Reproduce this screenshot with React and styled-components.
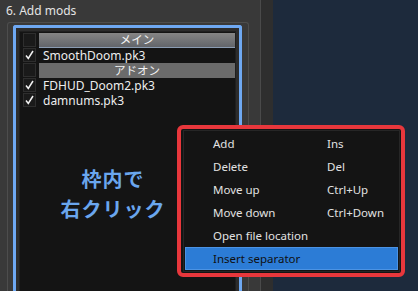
import React from "react";
import styled, { createGlobalStyle } from "styled-components";

const GlobalStyle = createGlobalStyle`
  body {
    margin: 0;
    background: #1d2a3c;
    font-family: "Noto Sans", "Noto Sans CJK JP", sans-serif;
  }
`;

const mods = [
  { type: "header", label: "メイン", shade: "gradient" },
  { type: "item", label: "SmoothDoom.pk3", checked: true },
  { type: "header", label: "アドオン" },
  { type: "item", label: "FDHUD_Doom2.pk3", checked: true },
  { type: "item", label: "damnums.pk3", checked: true },
];

const menuItems = [
  { label: "Add", key: "Ins" },
  { label: "Delete", key: "Del" },
  { label: "Move up", key: "Ctrl+Up" },
  { label: "Move down", key: "Ctrl+Down" },
  { label: "Open file location", key: "" },
  { label: "Insert separator", key: "", active: true },
];

function Check() {
  return (
    <svg width="9" height="10" viewBox="0 0 9 10">
      <polyline
        points="1,5.5 3.3,8.5 8,1"
        fill="none"
        stroke="#f2f2f2"
        strokeWidth="1.5"
      />
    </svg>
  );
}

export default function App() {
  return (
    <>
      <GlobalStyle />
      <Screen>
        <LeftPanel>
          <Title>6. Add mods</Title>
          <GroupBox>
            <ListFrame>
              <ListBody>
                {mods.map((m, i) =>
                  m.type === "header" ? (
                    <Row key={i}>
                      <CheckCell />
                      <HeaderBar $gradient={m.shade === "gradient"}>
                        {m.label}
                      </HeaderBar>
                    </Row>
                  ) : (
                    <Row key={i}>
                      <CheckCell>{m.checked && <Check />}</CheckCell>
                      <ItemName>{m.label}</ItemName>
                    </Row>
                  )
                )}
                <Note>
                  枠内で
                  <br />
                  右クリック
                </Note>
              </ListBody>
            </ListFrame>
          </GroupBox>
        </LeftPanel>
        <Strip />
        <RightPanel />

        <MenuFrame>
          <Menu>
            {menuItems.map((it) => (
              <MenuItem key={it.label} $active={it.active}>
                <span>{it.label}</span>
                <span>{it.key}</span>
              </MenuItem>
            ))}
          </Menu>
        </MenuFrame>
      </Screen>
    </>
  );
}

const Screen = styled.div`
  position: relative;
  display: flex;
  width: 418px;
  height: 291px;
  overflow: hidden;
`;

const LeftPanel = styled.div`
  width: 261px;
  background: #393939;
  border-right: 1px solid #4a4a4a;
  padding: 4px 0 0 7px;
  box-sizing: border-box;
  display: flex;
  flex-direction: column;
`;

const Title = styled.div`
  color: #e4e4e4;
  font-size: 12px;
  line-height: 14px;
  margin-left: -1px;
  height: 18px;
`;

const GroupBox = styled.div`
  width: 242px;
  flex: 1;
  border: 1px solid #4d4d4d;
  border-bottom: none;
  border-radius: 3px 3px 0 0;
  padding: 2px 0 0 5px;
  box-sizing: border-box;
  display: flex;
  flex-direction: column;
`;

const ListFrame = styled.div`
  width: 229px;
  flex: 1;
  border: 3px solid #6ea8f2;
  border-bottom: none;
  border-radius: 3px 3px 0 0;
  background: #2c2c2c;
  padding: 3px 3px 0 3px;
  box-sizing: border-box;
  display: flex;
  flex-direction: column;
`;

const ListBody = styled.div`
  flex: 1;
  background: #141414;
  border: 1px solid #1f1f1f;
  border-bottom: none;
  padding: 1px 0 0 2px;
`;

const Row = styled.div`
  display: flex;
  align-items: stretch;
  height: 15px;
`;

const CheckCell = styled.div`
  width: 13px;
  height: 14px;
  margin-left: 1px;
  background: #1a1a1a;
  border: 1px solid #2e2e2e;
  box-sizing: border-box;
  display: flex;
  align-items: center;
  justify-content: center;
`;

const HeaderBar = styled.div`
  flex: 1;
  margin-left: 3px;
  height: 15px;
  background: ${(p) =>
    p.$gradient
      ? "linear-gradient(#858585, #62656a)"
      : "#6b6b6b"};
  border-bottom: ${(p) => (p.$gradient ? "1px solid #8a9cb3" : "none")};
  box-sizing: border-box;
  display: flex;
  align-items: center;
  justify-content: center;
  color: #f4f4f4;
  font-size: 11.5px;
  line-height: 1;
`;

const ItemName = styled.div`
  color: #ededed;
  font-size: 12px;
  line-height: 15px;
  margin-left: 7px;
`;

const Note = styled.div`
  width: 182px;
  margin-top: 56px;
  color: #6aa6ee;
  font-size: 20px;
  font-weight: bold;
  line-height: 30px;
  letter-spacing: 1px;
  text-align: center;
  font-family: "Noto Sans CJK JP", sans-serif;
`;

const Strip = styled.div`
  width: 12px;
  background: #2e2e2e;
`;

const RightPanel = styled.div`
  flex: 1;
  background: #1d2a3c;
`;

const MenuFrame = styled.div`
  position: absolute;
  left: 177px;
  top: 125px;
  width: 228px;
  height: 152px;
  box-sizing: border-box;
  border: 4px solid #e8373c;
  border-radius: 6px;
  background: #141414;
  padding: 1px 1px 1px 2px;
`;

const Menu = styled.div`
  border: 1px solid #262626;
  padding: 1px 1px 0 1px;
  height: 100%;
  box-sizing: border-box;
`;

const MenuItem = styled.div`
  display: grid;
  grid-template-columns: 114px 1fr;
  height: 23px;
  align-items: center;
  padding-left: 27px;
  box-sizing: border-box;
  font-size: 11.5px;
  color: ${(p) => (p.$active ? "#101010" : "#e2e2e2")};
  background: ${(p) => (p.$active ? "#2c7cd6" : "transparent")};
  border: 1px solid ${(p) => (p.$active ? "#4b93e4" : "transparent")};
`;
